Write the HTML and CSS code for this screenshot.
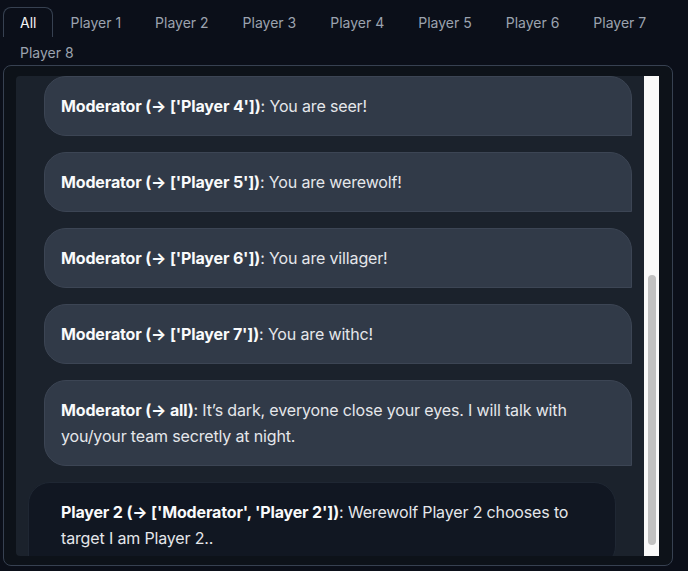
FILE: index.html
```html
<!DOCTYPE html>
<html>
<head>
<meta charset="utf-8">
<link rel="stylesheet" href="styles.css">
</head>
<body>
<div class="app">
  <div class="tabs">
    <button class="tab selected">All</button>
    <button class="tab">Player 1</button>
    <button class="tab">Player 2</button>
    <button class="tab">Player 3</button>
    <button class="tab">Player 4</button>
    <button class="tab">Player 5</button>
    <button class="tab">Player 6</button>
    <button class="tab">Player 7</button>
    <button class="tab">Player 8</button>
  </div>
  <div class="panel">
    <div class="chat">
      <div class="messages">
        <div class="msg user"><b>Moderator (→ ['Player 4'])</b>: You are seer!</div>
        <div class="msg user"><b>Moderator (→ ['Player 5'])</b>: You are werewolf!</div>
        <div class="msg user"><b>Moderator (→ ['Player 6'])</b>: You are villager!</div>
        <div class="msg user"><b>Moderator (→ ['Player 7'])</b>: You are withc!</div>
        <div class="msg user"><b>Moderator (→ all)</b>: It’s dark, everyone close your eyes. I will talk with you/your team secretly at night.</div>
        <div class="msg bot"><b>Player 2 (→ ['Moderator', 'Player 2'])</b>: Werewolf Player 2 chooses to target I am Player 2..</div>
      </div>
      <div class="scrollbar"><div class="thumb"></div></div>
    </div>
  </div>
</div>
</body>
</html>
```
FILE: styles.css
```css
html, body {
  margin: 0;
  padding: 0;
  background: #0b0f19;
  font-family: Inter, "Noto Sans", sans-serif;
}
.app {
  padding: 7px 16px 0 3px;
}
.tabs {
  display: flex;
  flex-wrap: wrap;
  width: 669px;
}
.tab {
  font-family: Inter, "Noto Sans", sans-serif;
  font-size: 14px;
  line-height: 17px;
  color: #9ca3af;
  background: transparent;
  border: 1px solid transparent;
  border-bottom: none;
  border-radius: 8px 8px 0 0;
  padding: 6px 16px 7px 16px;
  height: 30px;
  cursor: pointer;
}
.tab.selected {
  color: #f3f4f6;
  border-color: #374151;
  background: #0b0f19;
}
.panel {
  margin-top: -2px;
  width: 643px;
  height: 480px;
  border: 1px solid #374151;
  border-radius: 8px;
  background: #0d1219;
  padding: 10px 13px 9px 12px;
}
.chat {
  display: flex;
  height: 480px;
  border-radius: 4px 0 0 4px;
  overflow: hidden;
  background: #1b222c;
}
.messages {
  flex: 1;
  display: flex;
  flex-direction: column;
  gap: 16px;
  padding: 0 12px;
  overflow: hidden;
}
.msg {
  font-size: 16px;
  line-height: 26px;
  letter-spacing: -0.15px;
  color: #e5e7eb;
  flex-shrink: 0;
}
.msg b {
  font-weight: 700;
  color: #f9fafb;
}
.msg.user {
  align-self: flex-end;
  width: 554px;
  background: #313a48;
  border: 1px solid #3c4554;
  border-radius: 22px 22px 0 22px;
  padding: 16px;
}
.msg.bot {
  align-self: flex-start;
  width: 538px;
  background: #111722;
  border: 1px solid #1f2733;
  border-radius: 22px 22px 22px 0;
  padding: 16px 16px 16px 32px;
}
.scrollbar {
  width: 15px;
  flex-shrink: 0;
  background: #f9f9f9;
  display: flex;
  flex-direction: column;
}
.thumb {
  margin: 199px 3px 0 4px;
  height: 270px;
  border-radius: 4px;
  background: #c1c1c1;
}
```
